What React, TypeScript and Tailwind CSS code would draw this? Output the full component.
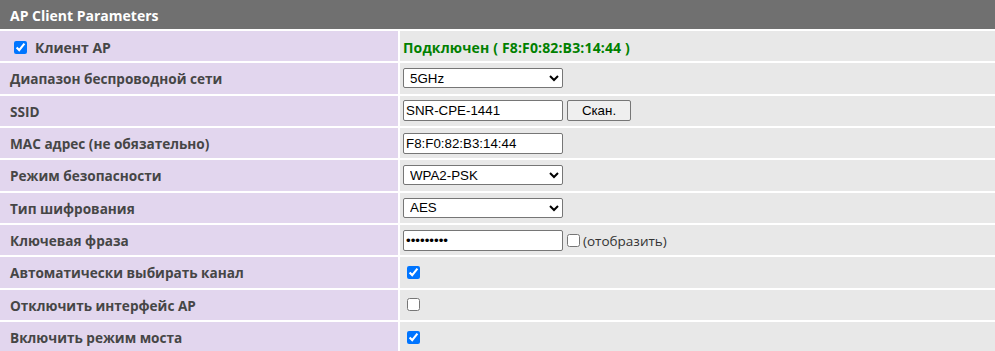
import { useState } from "react";

const labelFont = "font-['Open_Sans',sans-serif]";
const ctrl =
  "h-[20px] w-[160px] border border-[#767676] rounded-[2px] bg-white px-[2px] text-[13.33px] text-black font-['Liberation_Sans',Arial,sans-serif] outline-none";

function Row({ label, children }: { label: React.ReactNode; children: React.ReactNode }) {
  return (
    <div className="grid h-[30.33px] grid-cols-[398px_1fr] gap-x-[2px]">
      <div className={`flex items-center bg-[#e2d6ee] pt-[2px] pl-[10px] text-[13.6px] font-bold text-[#464646] ${labelFont}`}>
        {label}
      </div>
      <div className="flex items-center bg-[#e8e8e8] px-[3px]">{children}</div>
    </div>
  );
}

export default function App() {
  const [client, setClient] = useState(true);
  const [auto, setAuto] = useState(true);
  const [apOff, setApOff] = useState(false);
  const [bridge, setBridge] = useState(true);
  const [show, setShow] = useState(false);

  return (
    <div className="flex w-[995px] flex-col gap-[2px] bg-white">
      <div className={`flex h-[29px] items-center bg-[#707070] pt-[1px] pl-[10px] text-[14px] font-bold text-white ${labelFont}`}>
        AP Client Parameters
      </div>

      <Row
        label={
          <span className="flex items-center text-[14px]">
            <input
              type="checkbox"
              checked={client}
              onChange={(e) => setClient(e.target.checked)}
              className="mr-[8px] ml-[4px] h-[13px] w-[13px]"
            />
            Клиент AP
          </span>
        }
      >
        <span className={`pt-[2px] text-[14px] font-bold tracking-[0.15px] text-[#008000] ${labelFont}`}>
          Подключен ( F8:F0:82:B3:14:44 )
        </span>
      </Row>

      <Row label="Диапазон беспроводной сети">
        <select className={ctrl} defaultValue="5">
          <option value="2">2.4GHz</option>
          <option value="5">5GHz</option>
        </select>
      </Row>

      <Row label="SSID">
        <input className={`${ctrl} h-[21px]`} defaultValue="SNR-CPE-1441" />
        <button className="ml-[4px] h-[21px] w-[64px] rounded-[2px] border border-[#767676] bg-[#efefef] text-[13.33px] text-black font-['Liberation_Sans',Arial,sans-serif]">
          Скан.
        </button>
      </Row>

      <Row label="MAC адрес (не обязательно)">
        <input className={`${ctrl} h-[21px]`} defaultValue="F8:F0:82:B3:14:44" />
      </Row>

      <Row label="Режим безопасности">
        <select className={ctrl} defaultValue="wpa2">
          <option value="none">None</option>
          <option value="wpa2">WPA2-PSK</option>
        </select>
      </Row>

      <Row label="Тип шифрования">
        <select className={ctrl} defaultValue="aes">
          <option value="aes">AES</option>
          <option value="tkip">TKIP</option>
        </select>
      </Row>

      <Row label="Ключевая фраза">
        <input
          type={show ? "text" : "password"}
          className={`${ctrl} h-[21px]`}
          defaultValue="123456789"
        />
        <input
          type="checkbox"
          checked={show}
          onChange={(e) => setShow(e.target.checked)}
          className="mr-[3px] ml-[4px] h-[13px] w-[13px]"
        />
        <span className={`pt-[1px] text-[13.5px] text-[#333] ${labelFont}`}>(отобразить)</span>
      </Row>

      <Row label="Автоматически выбирать канал">
        <input
          type="checkbox"
          checked={auto}
          onChange={(e) => setAuto(e.target.checked)}
          className="ml-[4px] h-[13px] w-[13px]"
        />
      </Row>

      <Row label="Отключить интерфейс AP">
        <input
          type="checkbox"
          checked={apOff}
          onChange={(e) => setApOff(e.target.checked)}
          className="ml-[4px] h-[13px] w-[13px]"
        />
      </Row>

      <Row label="Включить режим моста">
        <input
          type="checkbox"
          checked={bridge}
          onChange={(e) => setBridge(e.target.checked)}
          className="ml-[4px] h-[13px] w-[13px]"
        />
      </Row>
    </div>
  );
}
